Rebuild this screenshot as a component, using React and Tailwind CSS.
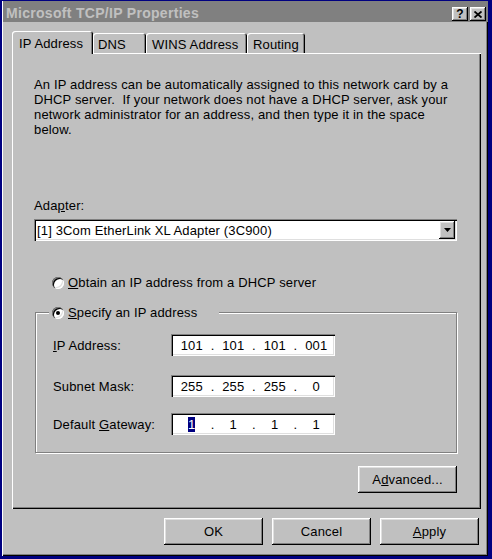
import React from 'react';

const raised =
  'shadow-[inset_-1px_-1px_#000,inset_1px_1px_#fff,inset_-2px_-2px_#808080,inset_2px_2px_#dfdfdf]';
const sunken =
  'shadow-[inset_1px_1px_#808080,inset_2px_2px_#000,inset_-1px_-1px_#fff,inset_-2px_-2px_#dfdfdf]';

const Radio = ({ checked }) => (
  <span
    className={`w-[12px] h-[12px] rounded-full bg-white shrink-0 flex items-center justify-center ${sunken}`}
  >
    {checked && <span className="w-[4px] h-[4px] rounded-full bg-black" />}
  </span>
);

const IpField = ({ parts, highlight }) => (
  <div className={`flex items-center h-[22px] w-[164px] bg-white pl-[2px] ${sunken}`}>
    {parts.map((p, i) => (
      <React.Fragment key={i}>
        {i > 0 && <span className="w-[4px] text-center">.</span>}
        <span className="w-[38px] text-center">
          {highlight && i === 0 ? <span className="bg-[#000080] text-white">{p}</span> : p}
        </span>
      </React.Fragment>
    ))}
  </div>
);

const Button = ({ children, className = '' }) => (
  <div
    className={`w-[99px] h-[27px] bg-[#c0c0c0] flex items-center justify-center ${raised} ${className}`}
  >
    {children}
  </div>
);

const tabShadow = 'shadow-[inset_1px_1px_#fff,inset_-1px_0_#000,inset_-2px_0_#808080]';

export default function App() {
  return (
    <div className="w-[492px] h-[559px] bg-[#000080] pt-[1px] pl-[2px] pr-[4px] pb-[3px] font-['Liberation_Sans',Arial,sans-serif] text-[13px] leading-[15px] tracking-[0.15px] text-black">
      <div className="w-[486px] h-[555px] bg-[#c0c0c0] border-l border-white shadow-[inset_-1px_-1px_#000,inset_-2px_-2px_#808080] flex flex-col">
        {/* title bar */}
        <div className="h-[21px] bg-[#808080] flex items-end justify-between pl-[3px] pr-[2px] pb-[1px]">
          <span className="font-bold text-[14px] tracking-[0.3px] text-[#c0c0c0]">Microsoft TCP/IP Properties</span>
          <div className="flex gap-[2px]">
            <div className={`w-[16px] h-[14px] bg-[#c0c0c0] flex items-center justify-center ${raised}`}>
              <span className="font-bold text-[12px] leading-none">?</span>
            </div>
            <div className={`w-[16px] h-[14px] bg-[#c0c0c0] flex items-center justify-center ${raised}`}>
              <svg width="8" height="7" viewBox="0 0 8 7">
                <path d="M0.5 0.5 L7.5 6.5 M7.5 0.5 L0.5 6.5" stroke="#000" strokeWidth="1.8" />
              </svg>
            </div>
          </div>
        </div>

        {/* tabs */}
        <div className="flex items-end mt-[9px] ml-[9px] h-[22px]">
          <div className={`relative z-10 w-[81px] h-[23px] -mb-[1px] bg-[#c0c0c0] pl-[7px] pt-[5px] rounded-t-[3px] ${tabShadow}`}>
            IP Address
          </div>
          <div className={`w-[53px] h-[20px] pl-[5px] pt-[4px] rounded-t-[3px] ${tabShadow}`}>DNS</div>
          <div className={`w-[101px] h-[20px] pl-[6px] pt-[4px] rounded-t-[3px] ${tabShadow}`}>WINS Address</div>
          <div className={`w-[58px] h-[20px] pl-[6px] pt-[4px] rounded-t-[3px] ${tabShadow}`}>Routing</div>
        </div>

        {/* tab panel */}
        <div className="ml-[9px] w-[469px] h-[456px] flex flex-col pl-[22px] shadow-[inset_1px_1px_#fff,inset_-1px_-1px_#000,inset_-2px_-2px_#808080]">
          <div className="mt-[24px] whitespace-pre">
            <div>An IP address can be automatically assigned to this network card by a</div>
            <div>DHCP server.  If your network does not have a DHCP server, ask your</div>
            <div>network administrator for an address, and then type it in the space</div>
            <div>below.</div>
          </div>

          <div className="mt-[61px]">
            Ada<span className="underline">p</span>ter:
          </div>
          <div className={`mt-[6px] w-[423px] h-[22px] bg-white flex items-center justify-between pl-[3px] pr-[2px] ${sunken}`}>
            <span>[1] 3Com EtherLink XL Adapter (3C900)</span>
            <div className={`w-[16px] h-[18px] bg-[#c0c0c0] flex items-center justify-center ${raised}`}>
              <svg width="7" height="4" viewBox="0 0 7 4">
                <path d="M0 0 H7 L3.5 4 Z" fill="#000" />
              </svg>
            </div>
          </div>

          <div className="mt-[34px] ml-[18px] flex items-center gap-[4px]">
            <Radio />
            <span>
              <span className="underline">O</span>btain an IP address from a DHCP server
            </span>
          </div>

          <fieldset className="mt-[15px] ml-[1px] w-[422px] border border-[#808080] shadow-[inset_1px_1px_#fff,1px_1px_#fff] pl-[17px] pb-[17px]">
            <legend className="ml-[-4px] pl-[3px] pr-[22px] bg-[#c0c0c0] flex items-center gap-[4px]">
              <Radio checked />
              <span>
                <span className="underline">S</span>pecify an IP address
              </span>
            </legend>
            <div className="mt-[14px] flex items-center">
              <span className="w-[118px]">
                <span className="underline">I</span>P Address:
              </span>
              <IpField parts={['101', '101', '101', '001']} />
            </div>
            <div className="mt-[19px] flex items-center">
              <span className="w-[118px]">Subnet Mask:</span>
              <IpField parts={['255', '255', '255', '0']} />
            </div>
            <div className="mt-[16px] flex items-center">
              <span className="w-[118px]">
                Default <span className="underline">G</span>ateway:
              </span>
              <IpField parts={['1', '1', '1', '1']} highlight />
            </div>
          </fieldset>

          <div className="mt-[13px] w-[423px] flex justify-end">
            <Button>
              <span>
                A<span className="underline">d</span>vanced...
              </span>
            </Button>
          </div>
        </div>

        {/* dialog buttons */}
        <div className="mt-[9px] flex justify-end gap-[9px] pr-[9px]">
          <Button>OK</Button>
          <Button>Cancel</Button>
          <Button>
            <span>
              <span className="underline">A</span>pply
            </span>
          </Button>
        </div>
      </div>
    </div>
  );
}
